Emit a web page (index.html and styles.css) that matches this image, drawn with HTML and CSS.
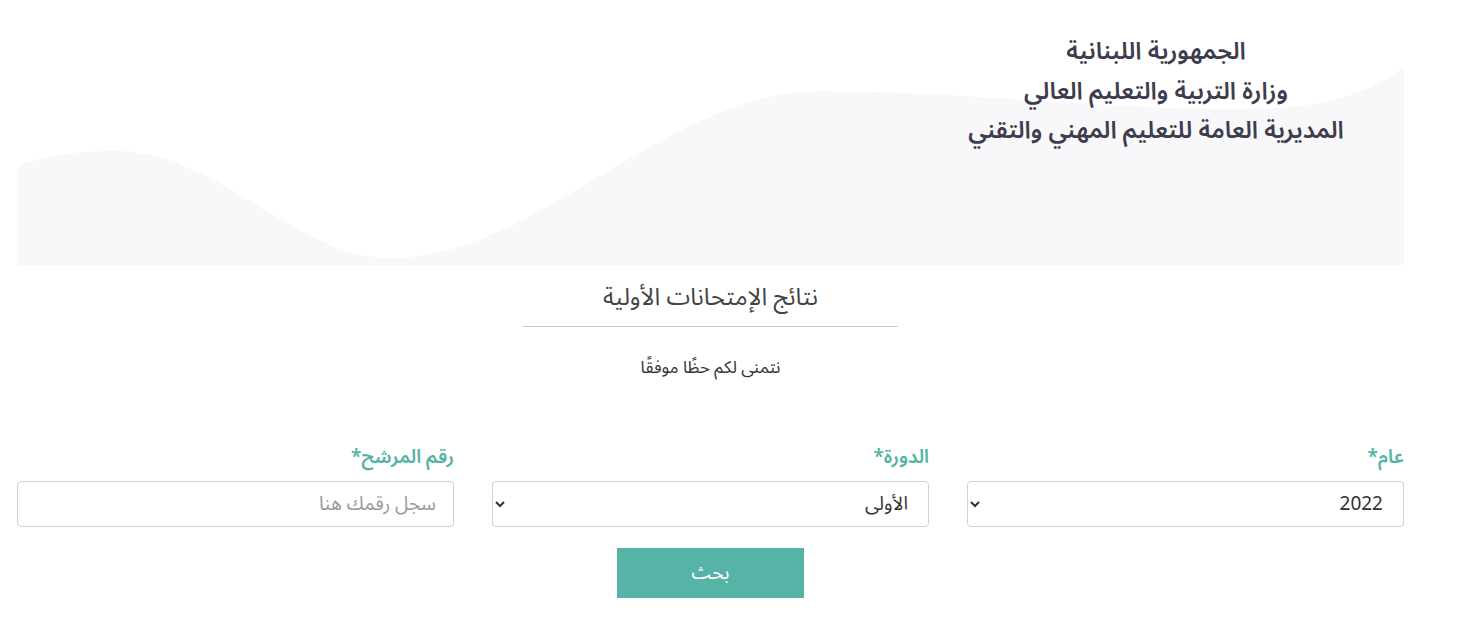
FILE: index.html
```html
<!DOCTYPE html>
<html lang="ar" dir="rtl">
<head>
    <meta charset="UTF-8">
    <meta name="viewport" content="width=device-width, initial-scale=1.0">
    <title>نتائج الإمتحانات الأولية</title>
    <link rel="stylesheet" href="styles.css">
</head>
<body>

    <div class="page">
        <div class="header">
            <svg class="wave" viewBox="0 0 1387 200" preserveAspectRatio="none">
                <path d="M0,102 C30,88 70,86 100,86 C200,86 280,193 373,193 C520,193 650,26 803,26 C950,26 1150,50 1260,43 C1340,38 1380,10 1387,0 L1387,200 L0,200 Z" fill="#f8f8fa"/>
            </svg>
            <div class="header-text">
                <p>الجمهورية اللبنانية</p>
                <p>وزارة التربية والتعليم العالي</p>
                <p>المديرية العامة للتعليم المهني والتقني</p>
            </div>
        </div>

        <div class="results">
            <h2>نتائج الإمتحانات الأولية</h2>
            <hr>
            <p class="wish">نتمنى لكم حظًا موفقًا</p>
        </div>

        <div class="search-form">
            <div class="field">
                <label for="year">عام*</label>
                <select id="year">
                    <option>2022</option>
                    <option>2021</option>
                </select>
            </div>
            <div class="field">
                <label for="session">الدورة*</label>
                <select id="session">
                    <option>الأولى</option>
                    <option>الثانية</option>
                </select>
            </div>
            <div class="field">
                <label for="candidate">رقم المرشح*</label>
                <input type="text" id="candidate" placeholder="سجل رقمك هنا">
            </div>
        </div>

        <div class="actions">
            <button>بحث</button>
        </div>
    </div>

</body>
</html>
```

FILE: styles.css
```css
body {
    margin: 8px;
    font-family: "Noto Sans Arabic", "Noto Sans", "DejaVu Sans", sans-serif;
    background: #fff;
    color: #333;
}
.page {
    width: 1387px;
    margin-right: 54px;
}
.header {
    position: relative;
    height: 257px;
    padding-top: 24px;
    box-sizing: border-box;
}
.header .wave {
    position: absolute;
    left: 0;
    bottom: 0;
    width: 100%;
    height: 200px;
    display: block;
}
.header-text {
    position: relative;
    width: 420px;
    margin-right: 38px;
    text-align: center;
    color: #3d3d4e;
    font-size: 24px;
    font-weight: 600;
}
.header-text p {
    margin: 0;
    line-height: 39.5px;
}
.results {
    text-align: center;
    padding-top: 16px;
}
.results h2 {
    margin: 0;
    font-size: 24px;
    font-weight: normal;
    color: #444;
    line-height: 34px;
}
.results hr {
    width: 375px;
    margin: 11px auto 0;
    border: none;
    border-top: 1px solid #ccc;
}
.wish {
    margin: 23px 0 0;
    font-size: 17px;
    color: #333;
}
.search-form {
    display: grid;
    grid-template-columns: repeat(3, 1fr);
    gap: 38px;
    margin-top: 59px;
}
.field label {
    display: block;
    color: #53b3a4;
    font-weight: 600;
    font-size: 19px;
    line-height: 24px;
    margin-bottom: 12px;
}
.field select,
.field input {
    width: 100%;
    height: 46px;
    box-sizing: border-box;
    border: 1px solid #cdd1da;
    border-radius: 4px;
    background: #fff;
    padding: 0 16px 0 12px;
    font-family: inherit;
    font-size: 19px;
    color: #333;
}
.field input {
    padding-right: 17px;
}
.field input::placeholder {
    color: #999;
}
.actions {
    text-align: center;
    margin-top: 21px;
}
.actions button {
    width: 187px;
    height: 50px;
    border: none;
    background: #55b4a5;
    color: #fff;
    font-family: inherit;
    font-size: 19px;
    cursor: pointer;
}
```
